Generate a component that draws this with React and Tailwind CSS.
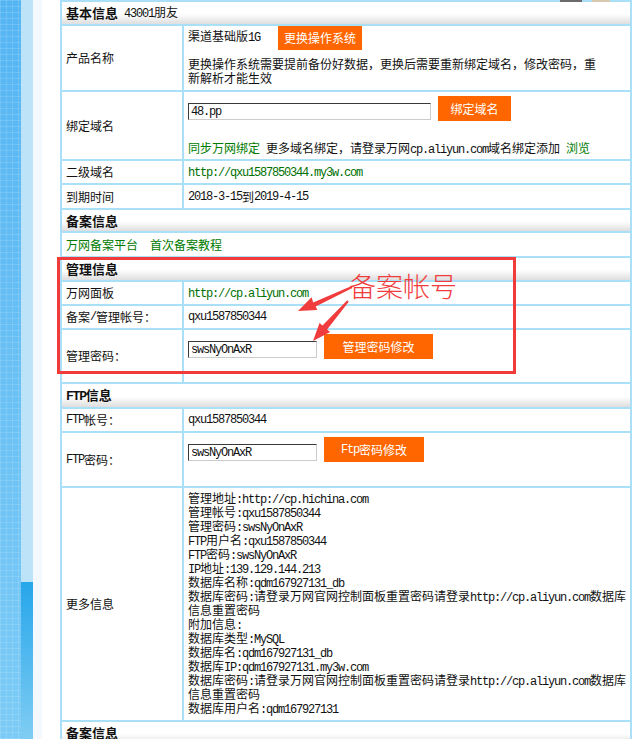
import React from "react";

// ascii runs get the narrow mono face (SimSun-like half width), cjk stays in Noto
const MONO = "font-['Liberation_Mono',monospace] tracking-[-1.2px]";

function Tx({ children }) {
  const parts = String(children).split(/([\x20-\x7e]+)/);
  return parts.map((p, i) =>
    /^[\x20-\x7e]+$/.test(p) ? (
      <span key={i} className={MONO}>
        {p}
      </span>
    ) : (
      p
    )
  );
}

function Header({ h, children }) {
  return (
    <div
      className={`${h} col-span-2 flex items-center pl-[4px] bg-[linear-gradient(to_bottom,#ffffff_55%,#dedede)]`}
    >
      {children}
    </div>
  );
}

function Row({ h, label, children, valueClass = "flex items-center" }) {
  return (
    <>
      <div className={`${h} bg-white flex items-center pl-[4px]`}>
        <Tx>{label}</Tx>
      </div>
      <div className={`${h} bg-white pl-[4px] ${valueClass}`}>{children}</div>
    </>
  );
}

function Btn({ w, children }) {
  return (
    <div
      className={`${w} h-[25px] bg-[#ff6600] text-white text-[12px] leading-[14px] flex items-center justify-center`}
    >
      <Tx>{children}</Tx>
    </div>
  );
}

function Field({ w, value }) {
  return (
    <input
      readOnly
      defaultValue={value}
      className={`${w} h-[17px] mb-[1px] bg-white border border-t-[#3a3a3a] border-l-[#3a3a3a] border-b-[#cccccc] border-r-[#cccccc] px-[2px] text-[12px] text-[#111] outline-none ${MONO}`}
    />
  );
}

const moreInfo = [
  "管理地址:http://cp.hichina.com",
  "管理帐号:qxu1587850344",
  "管理密码:swsNyOnAxR",
  "FTP用户名:qxu1587850344",
  "FTP密码:swsNyOnAxR",
  "IP地址:139.129.144.213",
  "数据库名称:qdm167927131_db",
  "数据库密码:请登录万网官网控制面板重置密码请登录http://cp.aliyun.com数据库",
  "信息重置密码",
  "附加信息:",
  "数据库类型:MySQL",
  "数据库名:qdm167927131_db",
  "数据库IP:qdm167927131.my3w.com",
  "数据库密码:请登录万网官网控制面板重置密码请登录http://cp.aliyun.com数据库",
  "信息重置密码",
  "数据库用户名:qdm167927131",
];

export default function App() {
  return (
    <div className="relative w-[642px] h-[739px] overflow-hidden flex bg-white text-[12px] leading-[14px] text-[#111] font-['Noto_Sans_CJK_SC',sans-serif]">
      {/* left sidebar edge */}
      <div className="flex w-[42px] shrink-0">
        <div className="w-[21px] bg-[repeating-linear-gradient(0deg,rgba(255,255,255,0.13)_0_1px,transparent_1px_6px),repeating-linear-gradient(90deg,rgba(255,255,255,0.13)_0_1px,transparent_1px_6px),linear-gradient(to_bottom,#55b5f3,#7ccbf6)]" />
        <div className="w-[12px] flex flex-col">
          <div className="h-[582px] bg-[#bde3f8]" />
          <div className="flex-1 bg-[linear-gradient(to_bottom,#26a6ea,#80cdf3)]" />
        </div>
        <div className="w-[9px] bg-[#f3f9fe]" />
      </div>

      <div className="pl-[18px] flex flex-col">
        <div className="h-[2px] relative">
          <div className="absolute left-[500px] top-0 w-[22px] h-[2px] bg-[#6b6b6b]" />
          <div className="absolute left-[532px] top-0 w-[18px] h-[2px] bg-[#d8c8b0]" />
        </div>

        <div className="w-[572px] grid grid-cols-[120px_446px] gap-[2px] p-[2px] bg-[#a9dff7]">
          <Header h="h-[22px]">
            <span className="font-bold text-[13px]">基本信息</span>
            <span className="ml-[6px]">
              <Tx>43001朋友</Tx>
            </span>
          </Header>

          <Row h="h-[64px]" label="产品名称" valueClass="flex flex-col">
            <div className="flex items-start">
              <span className="mt-[3px]">
                <Tx>渠道基础版1G</Tx>
              </span>
              <div className="ml-[18px] w-[84px] h-[24px] bg-[#ff6600] text-white flex items-center justify-center">
                更换操作系统
              </div>
            </div>
            <div className="mt-[7px] h-[14px]">
              更换操作系统需要提前备份好数据，更换后需要重新绑定域名，修改密码，重
            </div>
            <div className="h-[14px]">新解析才能生效</div>
          </Row>

          <Row h="h-[67px]" label="绑定域名" valueClass="flex flex-col pt-[4px]">
            <div className="flex items-end gap-[7px]">
              <Field w="w-[243px]" value="48.pp" />
              <Btn w="w-[73px]">绑定域名</Btn>
            </div>
            <div className="mt-[20px] h-[14px] whitespace-nowrap">
              <span className="text-[#007a00]">同步万网绑定</span>
              <span className="ml-[6px]">
                <Tx>更多域名绑定，请登录万网cp.aliyun.com域名绑定添加</Tx>
              </span>
              <span className="ml-[6px] text-[#007a00]">浏览</span>
            </div>
          </Row>

          <Row h="h-[22px]" label="二级域名">
            <span className="text-[#007000]">
              <Tx>http://qxu1587850344.my3w.com</Tx>
            </span>
          </Row>

          <Row h="h-[23px]" label="到期时间">
            <Tx>2018-3-15到2019-4-15</Tx>
          </Row>

          <Header h="h-[21px]">
            <span className="font-bold text-[13px]">备案信息</span>
          </Header>

          <div className="h-[23px] col-span-2 bg-white flex items-center pl-[4px] text-[#007a00]">
            <span>万网备案平台</span>
            <span className="ml-[12px]">首次备案教程</span>
          </div>

          <Header h="h-[22px]">
            <span className="font-bold text-[13px]">管理信息</span>
          </Header>

          <Row h="h-[22px]" label="万网面板">
            <span className="text-[#007000]">
              <Tx>http://cp.aliyun.com</Tx>
            </span>
          </Row>

          <Row h="h-[22px]" label="备案/管理帐号：">
            <Tx>qxu1587850344</Tx>
          </Row>

          <Row h="h-[52px]" label="管理密码：" valueClass="flex items-start pt-[4px]">
            <div className="flex items-end gap-[7px]">
              <Field w="w-[129px]" value="swsNyOnAxR" />
              <Btn w="w-[109px]">管理密码修改</Btn>
            </div>
          </Row>

          <Header h="h-[23px]">
            <span className="font-bold text-[13px]">
              <Tx>FTP信息</Tx>
            </span>
          </Header>

          <Row h="h-[22px]" label="FTP帐号：">
            <Tx>qxu1587850344</Tx>
          </Row>

          <Row h="h-[53px]" label="FTP密码：" valueClass="flex items-start pt-[4px]">
            <div className="flex items-end gap-[7px]">
              <Field w="w-[129px]" value="swsNyOnAxR" />
              <Btn w="w-[100px]">Ftp密码修改</Btn>
            </div>
          </Row>

          <Row h="h-[232px]" label="更多信息" valueClass="flex flex-col pt-[3px]">
            {moreInfo.map((line, i) => (
              <div key={i} className="h-[14px] whitespace-nowrap">
                <Tx>{line}</Tx>
              </div>
            ))}
          </Row>

          <Header h="h-[22px]">
            <span className="font-bold text-[13px]">备案信息</span>
          </Header>
        </div>
      </div>

      {/* red annotation over the screenshot */}
      <div className="absolute left-[57px] top-[257px] w-[459px] h-[117px] border-[3px] border-[#f23a3a] pointer-events-none" />
      <div className="absolute left-[349px] top-[268px] text-[27px] leading-[36px] font-light text-[#f03c3c] whitespace-nowrap">
        备案帐号
      </div>
      <svg
        className="absolute left-0 top-0 pointer-events-none"
        width="642"
        height="739"
        viewBox="0 0 642 739"
      >
        <polygon
          fill="#f03c3c"
          points="352.4,287.9 315.7,306.4 317.3,310.1 298,311 311.6,297.3 313.2,302.5 351.6,286.1"
        />
        <polygon
          fill="#f03c3c"
          points="348.75,301.66 327.1,329.5 330.1,332.1 313,341 319.5,322.9 322.5,325.5 347.25,300.34"
        />
      </svg>
    </div>
  );
}
